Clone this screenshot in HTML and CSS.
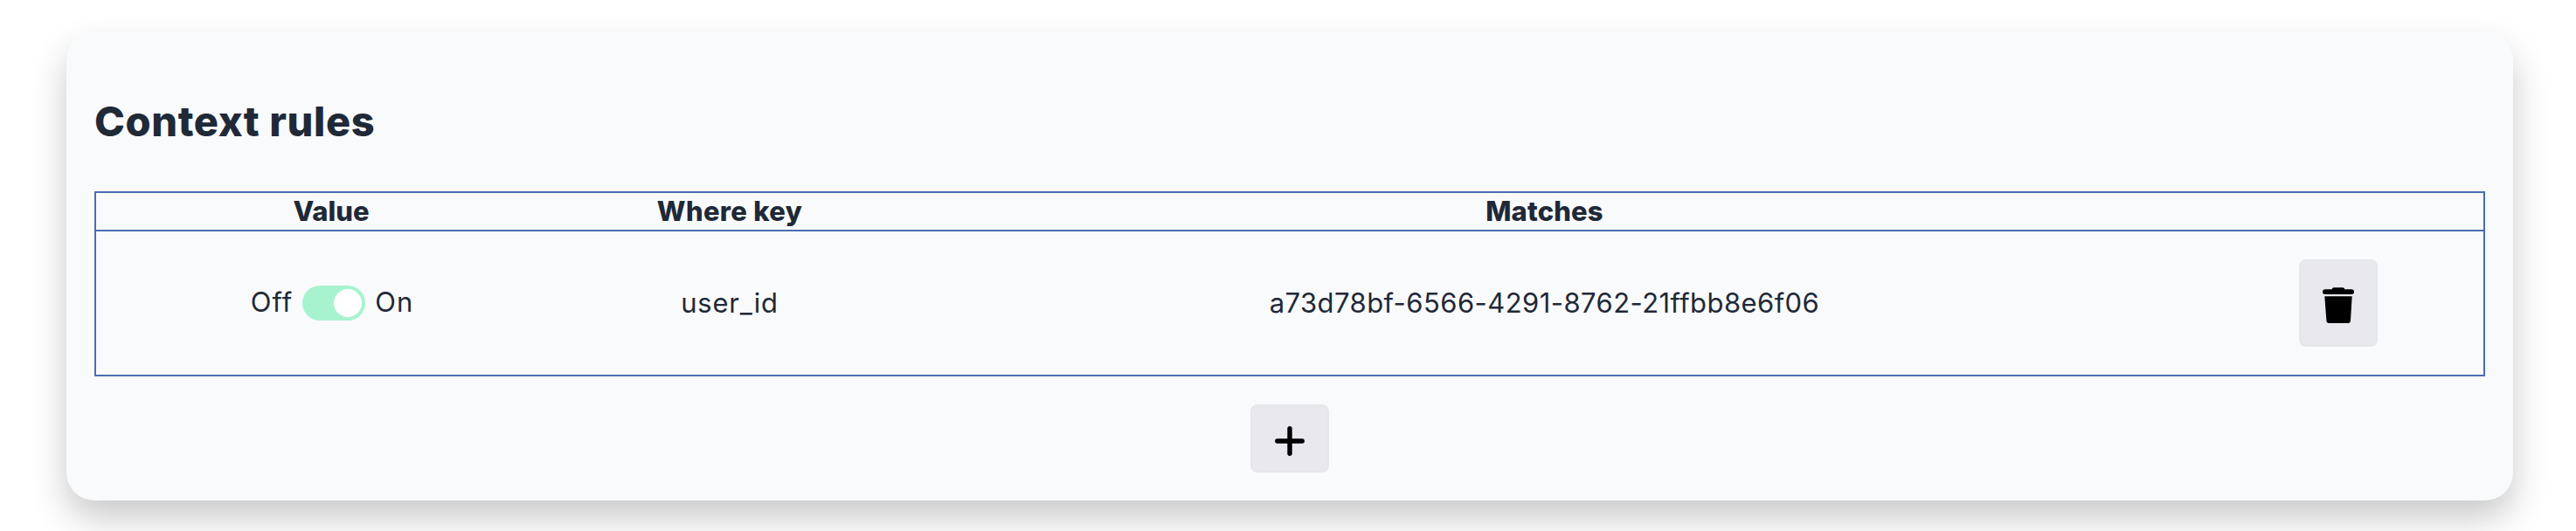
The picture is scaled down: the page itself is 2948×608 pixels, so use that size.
FILE: index.html
```
<!DOCTYPE html>
<html lang="en">
<head>
<meta charset="utf-8">
<title>Context rules</title>
<link rel="stylesheet" href="styles.css">
</head>
<body>
<section class="card">
  <h2 class="title">Context rules</h2>
  <div class="table">
    <div class="row head">
      <div class="cell value">Value</div>
      <div class="cell key">Where key</div>
      <div class="cell">Matches</div>
      <div class="cell"></div>
    </div>
    <div class="row body">
      <div class="cell switch"><span class="off">Off</span><span class="toggle"><span class="knob"></span></span><span class="on">On</span></div>
      <div class="cell text user">user_id</div>
      <div class="cell text">a73d78bf-6566-4291-8762-21ffbb8e6f06</div>
      <div class="cell action">
        <button class="btn delete" aria-label="Delete">
          <svg width="36" height="42" viewBox="0 0 36 42"><path d="M10.5 2.2Q11 .3 13 .3H23Q25 .3 25.5 2.2H33.2A2.8 2.8 0 0 1 33.2 8H2.8A2.8 2.8 0 0 1 2.8 2.2ZM2.3 10.3H33.7L32 38Q31.8 41 29 41H7.200Q4.600 41 4.400 38Z"/></svg>
        </button>
      </div>
    </div>
  </div>
  <button class="btn add" aria-label="Add">
    <svg width="34" height="34" viewBox="0 0 34 34"><path d="M17 2.800V31.200M2.800 17H31.200" stroke="#000" stroke-width="5.400" stroke-linecap="round"/></svg>
  </button>
</section>
</body>
</html>
```
FILE: styles.css
```
* { box-sizing: border-box; }
body {
  margin: 0;
  padding: 37px 72px 0 76px;
  height: 608px;
  overflow: hidden;
  background: #fff;
  color: #1f2937;
  font-family: Inter, "Liberation Sans", sans-serif;
  font-size: 31px;
}
.card {
  display: flex;
  flex-direction: column;
  height: 536px;
  padding: 72px 32px 32px;
  border-radius: 32px;
  background: #f9fafc;
  box-shadow: 0 20px 40px rgba(0, 0, 0, 0.21);
}
.title {
  margin: 0 0 50px;
  font-size: 47px;
  font-weight: 800;
  line-height: 60px;
  letter-spacing: 0.6px;
}
.table { border: 2px solid #4a6db0; }
.row {
  display: grid;
  grid-template-columns: 538px 374px 1491px 1fr;
}
.head {
  height: 44px;
  border-bottom: 2px solid #4a6db0;
  font-weight: 800;
  letter-spacing: 0.15px;
}
.value { letter-spacing: 0; }
.key { letter-spacing: 0.3px; }
.body { height: 164px; }
.cell {
  display: flex;
  align-items: center;
  justify-content: center;
  line-height: 36px;
  white-space: nowrap;
}
.switch { padding-left: 2px; }
.action { padding-right: 3px; }
.text { letter-spacing: 0.43px; padding-bottom: 1px; }
.user { letter-spacing: 0.8px; }
.off { letter-spacing: 1px; margin: -2px 11px 0 0; }
.on { letter-spacing: 1px; margin: -2px 0 0 11px; }
.toggle {
  display: flex;
  justify-content: flex-end;
  width: 72px;
  height: 40px;
  padding: 4px;
  border-radius: 20px;
  background: #a7f3d0;
}
.knob {
  width: 32px;
  height: 32px;
  border-radius: 50%;
  background: #fff;
}
.btn {
  display: flex;
  align-items: center;
  justify-content: center;
  width: 90px;
  padding: 0;
  border: 2px solid #e5e7eb;
  border-radius: 8px;
  background: #e9e8ed;
}
.delete { height: 100px; padding-top: 5px; }
.add { height: 78px; margin: 32px auto 0; padding-top: 5px; }
```
